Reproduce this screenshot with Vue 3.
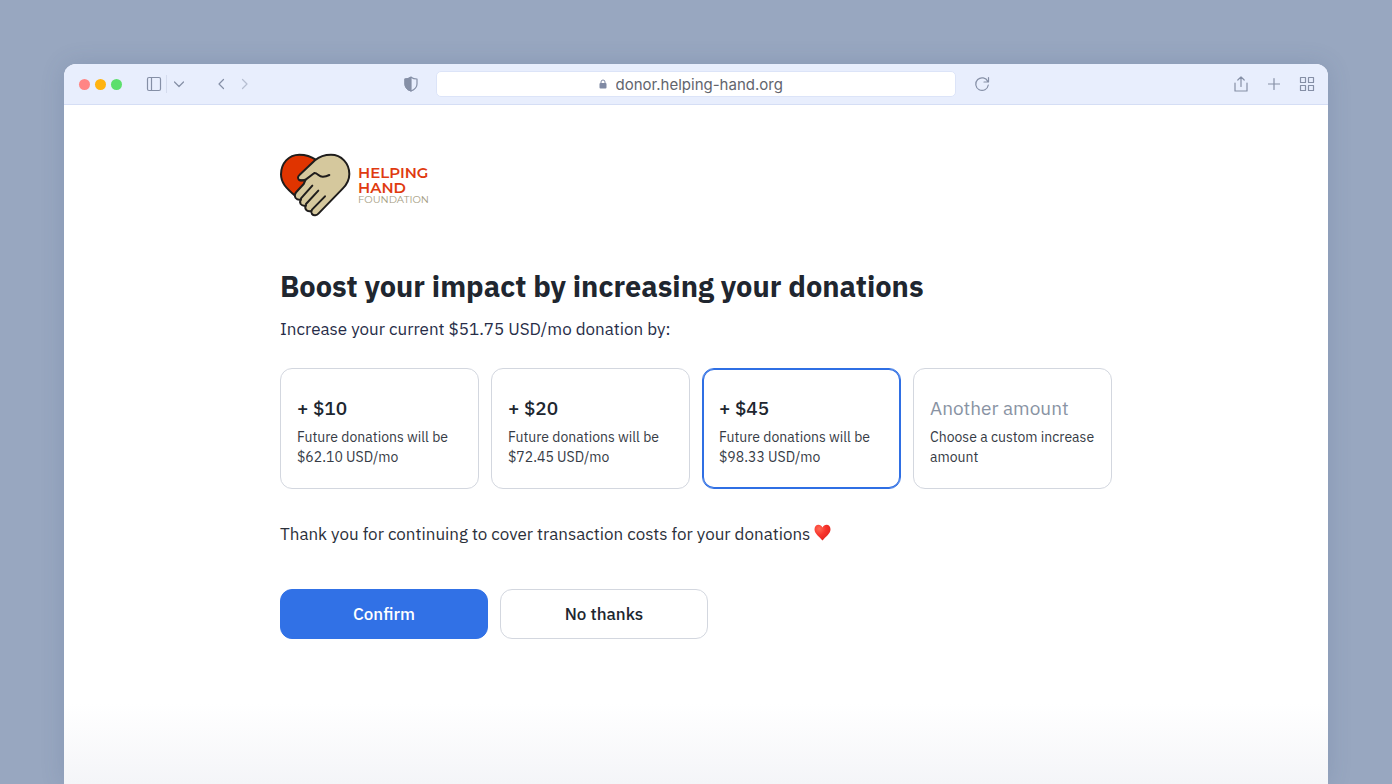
<script setup>
import { ref } from 'vue';

const address = ref('donor.helping-hand.org');
const selected = ref(45);
const customAmount = ref('');

const options = [
  { amount: 10, total: '$62.10 USD/mo' },
  { amount: 20, total: '$72.45 USD/mo' },
  { amount: 45, total: '$98.33 USD/mo' },
];

const confirmed = ref(false);

const submitForm = () => {
  confirmed.value = true;
};
</script>

<template>
  <div class="window">
    <header class="toolbar">
      <div class="tools">
        <div class="lights">
          <span class="light red"></span>
          <span class="light yellow"></span>
          <span class="light green"></span>
        </div>
        <button type="button" class="tool sidebar" aria-label="Sidebar">
          <svg width="16" height="16" viewBox="0 0 16 16"><rect x="1.5" y="1.5" width="13" height="13" rx="1.5" /><path d="M5.5 1.5v13" /></svg>
        </button>
        <span class="divider"></span>
        <button type="button" class="tool" aria-label="Tab groups">
          <svg width="12" height="16" viewBox="0 0 12 16"><path d="M1.5 6l4.5 4.5L10.5 6" /></svg>
        </button>
        <button type="button" class="tool back" aria-label="Back">
          <svg width="12" height="16" viewBox="0 0 12 16"><path d="M8.5 3.5L4 8l4.5 4.5" /></svg>
        </button>
        <button type="button" class="tool forward" aria-label="Forward" disabled>
          <svg width="12" height="16" viewBox="0 0 12 16"><path d="M3.5 3.5L8 8l-4.5 4.5" /></svg>
        </button>
        <button type="button" class="tool shield" aria-label="Privacy report">
          <svg width="14" height="16" viewBox="0 0 14 16">
            <path d="M7 1.2C5.5 2.3 3 3 1 3v5c0 3.2 2.5 5.6 6 7 3.5-1.4 6-3.8 6-7V3C11 3 8.5 2.3 7 1.2z" />
            <path class="solid" d="M7 1.2C5.5 2.3 3 3 1 3v5c0 3.2 2.5 5.6 6 7z" />
          </svg>
        </button>
      </div>

      <div class="address">
        <svg class="lock" width="8" height="10" viewBox="0 0 8 10">
          <rect x="0.5" y="4" width="7" height="5.5" rx="1" />
          <path d="M2 4.5V3a2 2 0 0 1 4 0v1.5" />
        </svg>
        <input type="text" class="url" aria-label="Address" v-model="address">
      </div>

      <div class="tools">
        <button type="button" class="tool" aria-label="Reload">
          <svg width="16" height="16" viewBox="0 0 16 16"><path d="M13.8 5.5A6.3 6.3 0 1 0 14.3 9M14.5 1.5V6H10" /></svg>
        </button>
        <button type="button" class="tool share" aria-label="Share">
          <svg width="14" height="16" viewBox="0 0 14 16"><path d="M1 7v8h12V7M7 10.5V1M3.8 4L7 .9 10.2 4" /></svg>
        </button>
        <button type="button" class="tool add" aria-label="New tab">
          <svg width="12" height="16" viewBox="0 0 12 16"><path d="M6 2.5v11M.5 8h11" /></svg>
        </button>
        <button type="button" class="tool" aria-label="Tab overview">
          <svg width="16" height="16" viewBox="0 0 16 16">
            <rect x="1.5" y="1.5" width="5" height="5" /><rect x="9.5" y="1.5" width="5" height="5" />
            <rect x="1.5" y="9.5" width="5" height="5" /><rect x="9.5" y="9.5" width="5" height="5" />
          </svg>
        </button>
      </div>
    </header>

    <main class="page">
      <div class="logo">
        <svg class="mark" width="72" height="64" viewBox="30 26 216 192">
          <path fill="#e03400" d="M137 46C122 35 105 31 88 31 56 31 33 57 33 90c0 25 14 40 44 66l50-55z" />
          <path fill="#d5c89d" d="M88 107c-6-4-5-11 1-16l46-43c15-13 32-17 48-17 31 0 55 26 55 58 0 19-8 32-20 44l-72 74c-6 7-15 8-20 2-3-4-3-7-1-10-6 3-13 2-17-3-3-5-3-9 0-13-6 2-12 1-16-4-3-5-2-9 1-13-6 1-12 0-16-5-4-6-3-12 2-18l22-24 6-13c-7 2-14 3-19 1z" />
          <path d="M88 107c7 3 14 1 20-2l25-19c10-1 13 12 26 11 8 0 13-2 19-5" />
          <path d="M93 162l34-38M108 179l37-40M126 196l39-40" />
        </svg>
        <div class="brand">
          <span>HELPING</span>
          <span>HAND</span>
          <small>FOUNDATION</small>
        </div>
      </div>

      <form @submit.prevent="submitForm">
        <h1>Boost your impact by increasing your donations</h1>
        <p class="lead">Increase your current $51.75 USD/mo donation by:</p>

        <div class="cards">
          <label v-for="option in options" :key="option.amount" class="card" :class="{ active: selected === option.amount }">
            <input type="radio" class="radio" name="increase" :value="option.amount" v-model="selected">
            <span class="amount">+ ${{ option.amount }}</span>
            <span class="detail">Future donations will be {{ option.total }}</span>
          </label>
          <label class="card" for="custom-amount">
            <input type="text" id="custom-amount" class="amount custom" placeholder="Another amount" v-model="customAmount">
            <span class="detail">Choose a custom increase amount</span>
          </label>
        </div>

        <p class="thanks">
          Thank you for continuing to cover transaction costs for your donations
          <svg class="heart" width="17" height="17" viewBox="0 0 17 17" aria-label="heart">
            <defs>
              <radialGradient id="heart-fill" cx="0.3" cy="0.25" r="0.8">
                <stop offset="0" stop-color="#ff6a55" />
                <stop offset="0.5" stop-color="#f8342c" />
                <stop offset="1" stop-color="#e0241f" />
              </radialGradient>
            </defs>
            <path fill="url(#heart-fill)" d="M8.5 3.6C7.6 1.7 6.2.8 4.5.8 2.1.8.5 2.7.5 5.2c0 4.6 5 7.6 8 11.300 3-3.700 8-6.700 8-11.300 0-2.500-1.600-4.400-4-4.400-1.700 0-3.100.9-4 2.800z" />
          </svg>
        </p>

        <div class="actions">
          <button type="submit" class="button primary">Confirm</button>
          <button type="button" class="button">No thanks</button>
        </div>
      </form>
    </main>
  </div>
</template>

<style>
body {
  background: #98a7c0;
}
</style>

<style scoped>
.window {
  box-sizing: border-box;
  min-height: calc(100vh - 64px);
  margin: 64px 64px 0;
  overflow: hidden;
  border-radius: 12px 12px 0 0;
  background: linear-gradient(to top, #f4f5f8, #fff 80px);
  box-shadow: 0 0 24px rgba(50, 75, 120, 0.16);
  font-family: "IBM Plex Sans", "Noto Sans", sans-serif;
  color: #20262f;
}

.toolbar {
  display: grid;
  grid-template-columns: 1fr minmax(0, 520px) 1fr;
  gap: 18px;
  align-items: center;
  box-sizing: border-box;
  height: 41px;
  padding: 0 13px;
  border-bottom: 1px solid #d5def5;
  background: #e8eefd;
}

.tools {
  display: flex;
  align-items: center;
}

.lights {
  display: flex;
  gap: 5px;
  margin-left: 2px;
}

.light {
  width: 11px;
  height: 11px;
  border-radius: 50%;
}

.red {
  background: #ff8585;
}

.yellow {
  background: #ffb310;
}

.green {
  background: #5cdf6c;
}

.tool {
  display: flex;
  padding: 0;
  border: none;
  background: none;
  color: #858fa6;
  cursor: pointer;
}

.tool svg {
  fill: none;
  stroke: currentColor;
  stroke-width: 1.2;
  stroke-linecap: round;
  stroke-linejoin: round;
}

.tool .solid {
  fill: currentColor;
}

.sidebar {
  margin-left: 24px;
}

.divider {
  width: 1px;
  height: 18px;
  margin: 0 6px 0 4px;
  background: #d5dcee;
}

.back {
  margin-left: 30px;
}

.forward {
  margin-left: 12px;
  opacity: 0.5;
}

.shield {
  margin-left: auto;
}

.address {
  display: flex;
  justify-content: center;
  align-items: center;
  gap: 9px;
  box-sizing: border-box;
  height: 26px;
  border: 1px solid #dce4f8;
  border-radius: 5px;
  background: #fff;
}

.lock {
  fill: #7f89a3;
  stroke: none;
}

.lock path {
  fill: none;
  stroke: #7f89a3;
}

.url {
  width: 178px;
  padding: 0;
  border: none;
  outline: none;
  background: none;
  font-family: Inter, sans-serif;
  font-size: 15px;
  color: #62656d;
}

.share {
  margin-left: auto;
  margin-right: 20px;
}

.add {
  margin-right: 19px;
}

.page {
  max-width: 832px;
  margin: 0 auto;
  padding: 48px 24px;
}

.logo {
  display: flex;
  gap: 6px;
}

.mark {
  fill: none;
  stroke: #1f1d1c;
  stroke-width: 6;
  stroke-linecap: round;
  stroke-linejoin: round;
}

.brand {
  display: flex;
  flex-direction: column;
  padding-top: 12px;
  font-family: Montserrat, Inter, sans-serif;
  font-size: 15px;
  font-weight: 600;
  line-height: 15px;
  color: #e03a10;
}

.brand small {
  font-size: 10px;
  font-weight: 400;
  line-height: 10px;
  color: #a39b80;
}

h1 {
  margin: 51px 0 13px;
  font-size: 29px;
  font-weight: 700;
  line-height: 36px;
}

p {
  margin: 0;
  font-size: 17px;
  line-height: 24px;
}

.lead {
  color: #272d48;
}

.thanks {
  color: #2b303a;
}

.cards {
  display: grid;
  grid-template-columns: repeat(4, 1fr);
  gap: 12px;
  margin: 27px 0 33px;
}

.card {
  display: flex;
  flex-direction: column;
  gap: 7px;
  box-sizing: border-box;
  min-width: 0;
  padding: 27px 16px 21px;
  border: 1px solid #d3d7df;
  border-radius: 12px;
  background: #fff;
  cursor: pointer;
}

.active {
  border-color: #2f6fe4;
  box-shadow: inset 0 0 0 1px #2f6fe4;
}

.radio {
  position: absolute;
  opacity: 0;
}

.amount {
  font-size: 19px;
  font-weight: 500;
  line-height: 24px;
}

.custom {
  width: 100%;
  height: 24px;
  padding: 0;
  border: none;
  outline: none;
  background: none;
  font-family: inherit;
  font-weight: 400;
  color: inherit;
}

.custom::placeholder {
  color: #8993a3;
}

.detail {
  font-size: 14px;
  line-height: 20px;
  color: #363b45;
}

.heart {
  vertical-align: -1px;
}

.actions {
  display: flex;
  gap: 12px;
  margin-top: 43px;
}

.button {
  width: 208px;
  height: 50px;
  border: 1px solid #d3d7df;
  border-radius: 12px;
  background: #fff;
  font-family: inherit;
  font-size: 17px;
  font-weight: 500;
  color: #20262f;
  cursor: pointer;
}

.primary {
  border-color: #3171e6;
  background: #3171e6;
  color: #fff;
}
</style>
